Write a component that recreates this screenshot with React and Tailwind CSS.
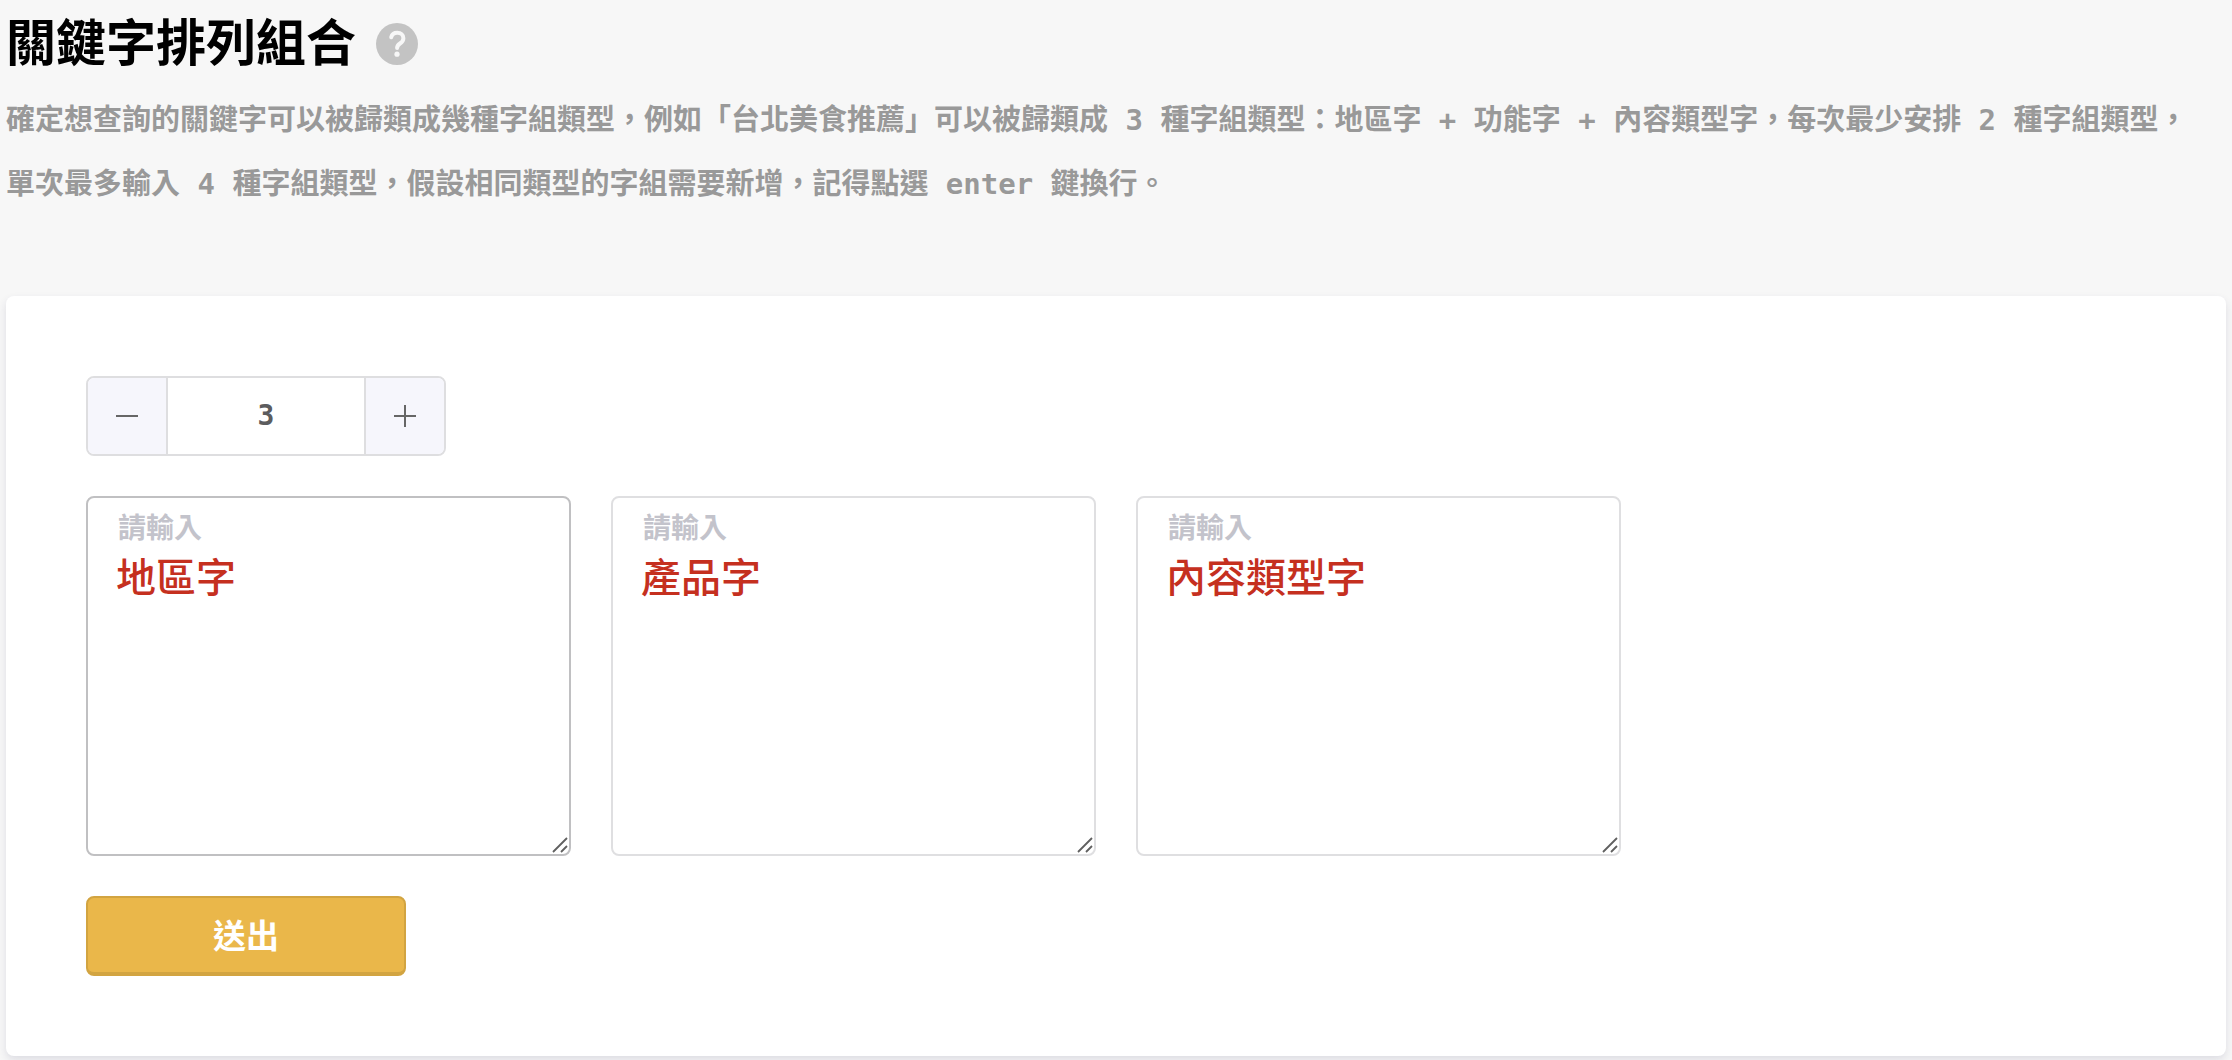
import { useState } from "react";

const FIELDS = ["地區字", "產品字", "內容類型字", "功能字"];

function HelpIcon() {
  return (
    <svg viewBox="0 0 42 42" className="size-[42px]" aria-hidden="true">
      <circle cx="21" cy="21" r="21" fill="#c3c3c3" />
      <path
        d="M15.200 14.200C16 11.200 18.200 9.800 21.200 9.800c3.700 0 6.200 2.100 6.200 5.400 0 2.500-1.300 3.900-3.400 5.300-2 1.300-2.900 2.200-2.900 4.600"
        fill="none"
        stroke="#f7f7f7"
        strokeWidth="4"
        strokeLinecap="round"
      />
      <circle cx="21" cy="31.200" r="2.600" fill="#f7f7f7" />
    </svg>
  );
}

function StepIcon({ plus }) {
  return (
    <svg viewBox="0 0 22 22" className="size-[22px]" stroke="#666" strokeWidth="2" aria-hidden="true">
      <path d={plus ? "M0 11H22M11 0V22" : "M0 11H22"} />
    </svg>
  );
}

function KeywordField({ id, name, active }) {
  return (
    <div className="relative w-[485px]">
      <textarea
        id={id}
        placeholder="請輸入"
        className={`block h-[360px] w-full resize-none rounded-lg border-2 bg-white px-[30px] py-2.5 text-[28px] leading-[42px] font-bold text-[#606266] outline-none placeholder:text-[#c3c3cb] ${
          active ? "border-[#c0c0c2]" : "border-[#dfdfe1]"
        }`}
      />
      <label
        htmlFor={id}
        className="pointer-events-none absolute top-[52px] left-[30px] text-[40px] leading-[60px] font-medium text-[#c5301f]"
      >
        {name}
      </label>
      <svg
        viewBox="0 0 16 16"
        className="pointer-events-none absolute right-[3px] bottom-[3px] size-4"
        stroke="#606060"
        strokeWidth="1.800"
        aria-hidden="true"
      >
        <path d="M1 15L15 1M9 15L15 9" />
      </svg>
    </div>
  );
}

export default function App() {
  const [count, setCount] = useState(3);
  const change = (n) => setCount(Math.min(4, Math.max(2, n)));

  return (
    <main className="min-h-screen bg-[#f7f7f7] px-1.5 pb-1 font-['DejaVu_Sans_Mono','Noto_Sans_CJK_TC',monospace]">
      <header className="flex h-[88px] items-center gap-5">
        <h1 className="text-[50px] leading-[72px] font-bold text-black">關鍵字排列組合</h1>
        <button type="button" aria-label="說明" className="rounded-full">
          <HelpIcon />
        </button>
      </header>

      <p className="text-[29px] leading-[64px] font-bold text-[#999]">
        確定想查詢的關鍵字可以被歸類成幾種字組類型，例如「台北美食推薦」可以被歸類成 3 種字組類型：地區字 + 功能字 + 內容類型字，每次最少安排 2 種字組類型，
        <br />
        單次最多輸入 4 種字組類型，假設相同類型的字組需要新增，記得點選 enter 鍵換行。
      </p>

      <form
        className="mt-20 flex flex-col items-start gap-10 rounded-lg bg-white p-20 shadow-[0_4px_8px_rgba(40,40,90,0.12)]"
        onSubmit={(e) => e.preventDefault()}
      >
        <div className="flex h-20 w-[360px] overflow-hidden rounded-lg border-2 border-[#dedee0]">
          <button
            type="button"
            aria-label="減少"
            onClick={() => change(count - 1)}
            className="flex w-20 items-center justify-center border-r-2 border-[#dedee0] bg-[#f6f6fc]"
          >
            <StepIcon />
          </button>
          <input
            aria-label="字組類型數量"
            inputMode="numeric"
            value={count}
            onChange={(e) => change(Number(e.target.value) || 2)}
            className="min-w-0 flex-1 bg-white text-center text-[28px] font-bold text-[#5c5c5e] outline-none"
          />
          <button
            type="button"
            aria-label="增加"
            onClick={() => change(count + 1)}
            className="flex w-20 items-center justify-center border-l-2 border-[#dedee0] bg-[#f6f6fc]"
          >
            <StepIcon plus />
          </button>
        </div>

        <div className="flex flex-wrap gap-10">
          {FIELDS.slice(0, count).map((name, i) => (
            <KeywordField key={name} id={`field-${i}`} name={name} active={i === 0} />
          ))}
        </div>

        <button
          type="submit"
          className="h-20 w-80 rounded-lg border-2 border-b-4 border-[#d2a441] bg-[#eab74a] pt-1 text-[33px] font-bold text-white"
        >
          送出
        </button>
      </form>
    </main>
  );
}
